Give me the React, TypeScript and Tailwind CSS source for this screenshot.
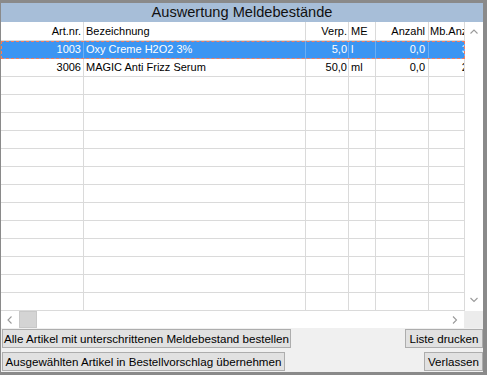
import React from 'react';

const cols = [
  { w: 'w-[83px]', al: 'justify-end pr-[2px]' },
  { w: 'w-[222px]', al: 'justify-start pl-[2px]' },
  { w: 'w-[43px]', al: 'justify-end pr-[1px]' },
  { w: 'w-[27px]', al: 'justify-start pl-[2px]' },
  { w: 'w-[53px]', al: 'justify-end pr-[3px]' },
  { w: 'w-[36px]', al: 'justify-start' },
];

const header = ['Art.nr.', 'Bezeichnung', 'Verp.', 'ME', 'Anzahl', 'Mb.Anzahl'];

const data = [
  ['1003', 'Oxy Creme H2O2 3%', '5,0', 'l', '0,0', '3,0'],
  ['3006', 'MAGIC Anti Frizz Serum', '50,0', 'ml', '0,0', '2,0'],
];

function Chevron({ dir }: { dir: 'up' | 'down' | 'left' | 'right' }) {
  const pts = {
    up: '0.5,4.5 4,1 7.5,4.5',
    down: '0.5,1 4,4.5 7.5,1',
    left: '4.5,0.5 1,4 4.5,7.5',
    right: '1,0.5 4.5,4 1,7.5',
  }[dir];
  const vert = dir === 'up' || dir === 'down';
  return (
    <svg width={vert ? 8 : 6} height={vert ? 6 : 8} viewBox={vert ? '0 0 8 6' : '0 0 6 8'}>
      <polyline points={pts} fill="none" stroke="#9a9a9a" strokeWidth="1.1" />
    </svg>
  );
}

function Row({ cells, selected }: { cells: string[]; selected?: boolean }) {
  return (
    <div
      className={
        selected
          ? 'flex h-[18px] bg-[#3b95f2] text-white outline-dashed outline-1 outline-[#f27c5e] -outline-offset-1'
          : 'flex h-[18px] bg-white text-black'
      }
    >
      {cols.map((c, i) => (
        <div
          key={i}
          className={`${c.w} ${c.al} flex items-center overflow-hidden whitespace-nowrap border-r border-b ${
            selected ? 'border-[#6aaef5]' : 'border-[#dadada]'
          }`}
        >
          {i === 5 ? (
            <div className="w-[50px] shrink-0 flex justify-end pr-[2px]">{cells[i]}</div>
          ) : (
            cells[i]
          )}
        </div>
      ))}
    </div>
  );
}

export default function App() {
  const empty = Array.from({ length: 13 }, () => ['', '', '', '', '', '']);

  return (
    <div className="w-[487px] h-[375px] bg-[#8a8a8a] pt-[3px] pl-[1px] pr-[4px] pb-[3px] font-['Liberation_Sans',Arial,sans-serif] text-[11px] leading-none">
      <div className="h-full bg-[#f0f0f0] flex flex-col">
        <div className="h-[19px] bg-[#a7bed8] flex items-center justify-center text-[14.6px] text-[#111]">
          Auswertung Meldebestände
        </div>

        <div className="flex">
          <div className="flex flex-col">
            <div className="flex h-[19px] bg-white text-black">
              {cols.map((c, i) => (
                <div
                  key={i}
                  className={`${c.w} ${i === 5 ? 'justify-start pl-[1px]' : c.al} flex items-center overflow-hidden whitespace-nowrap border-r border-b border-[#dadada]`}
                >
                  {header[i]}
                </div>
              ))}
            </div>
            <Row cells={data[0]} selected />
            <Row cells={data[1]} />
            {empty.map((r, i) => (
              <Row key={i} cells={r} />
            ))}
          </div>
          <div className="w-[18px] h-[289px] bg-white flex flex-col items-center justify-between pt-[7px] pb-[8px]">
            <Chevron dir="up" />
            <Chevron dir="down" />
          </div>
        </div>

        <div className="flex h-[17px] bg-white">
          <div className="w-[18px] flex items-center justify-center">
            <Chevron dir="left" />
          </div>
          <div className="w-[18px] bg-[#d4d4d4] border border-[#c8c8c8]" />
          <div className="flex-1" />
          <div className="w-[18px] flex items-center justify-center">
            <Chevron dir="right" />
          </div>
          <div className="w-[19px] bg-[#ececec]" />
        </div>

        <div className="flex justify-between mt-[1px] pl-[1px]">
          <button className="w-[289px] h-[19px] bg-[#e1e1e1] border border-[#adadad] text-[11.6px] text-black whitespace-nowrap flex items-center justify-center">
            Alle Artikel mit unterschrittenen Meldebestand bestellen
          </button>
          <button className="w-[78px] h-[19px] bg-[#e1e1e1] border border-[#adadad] text-[11.6px] text-black whitespace-nowrap flex items-center justify-center">
            Liste drucken
          </button>
        </div>
        <div className="flex justify-between mt-[4px] pl-[1px]">
          <button className="w-[283px] h-[19px] bg-[#e1e1e1] border border-[#adadad] text-[11.6px] text-black whitespace-nowrap flex items-center justify-center">
            Ausgewählten Artikel in Bestellvorschlag übernehmen
          </button>
          <button className="w-[59px] h-[19px] bg-[#e1e1e1] border border-[#adadad] text-[11.6px] text-black whitespace-nowrap flex items-center justify-center">
            Verlassen
          </button>
        </div>
      </div>
    </div>
  );
}
